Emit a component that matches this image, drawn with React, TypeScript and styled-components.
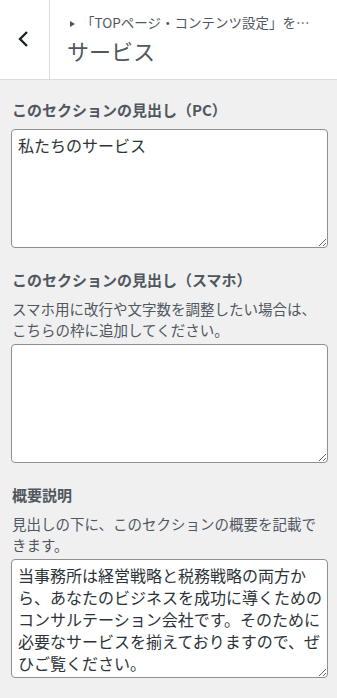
import React from 'react'
import styled, { createGlobalStyle } from 'styled-components'

const GlobalStyle = createGlobalStyle`
  html, body {
    margin: 0;
    padding: 0;
    background: #f0f0f1;
  }
  body {
    font-family: "Noto Sans CJK JP", "Noto Sans", sans-serif;
    color: #50575e;
  }
`

const Panel = styled.div`
  width: 337px;
  min-height: 698px;
  background: #f0f0f1;
`

const Header = styled.header`
  display: flex;
  height: 79px;
  background: #fff;
  border-bottom: 1px solid #dcdcde;
`

const BackButton = styled.button`
  display: flex;
  align-items: center;
  justify-content: center;
  width: 50px;
  padding: 0 2px 2px 0;
  border: none;
  border-right: 1px solid #dcdcde;
  background: transparent;
  cursor: pointer;
`

const TitleBlock = styled.div`
  display: flex;
  flex-direction: column;
  min-width: 0;
  flex: 1;
  padding: 10px 8px 0 17px;
`

const Breadcrumb = styled.span`
  display: block;
  font-size: 13.5px;
  line-height: 24px;
  white-space: nowrap;
  color: #50575e;

  &::before {
    content: '';
    display: inline-block;
    width: 0;
    height: 0;
    margin: 0 6px 1px 3px;
    border-top: 3px solid transparent;
    border-bottom: 3px solid transparent;
    border-left: 5px solid #50575e;
  }
`

const Title = styled.h1`
  margin: 2px 0 0;
  font-size: 22px;
  line-height: 28px;
  font-weight: 400;
  color: #50575e;
`

const Content = styled.div`
  display: flex;
  flex-direction: column;
  gap: 20px;
  padding: 18px 9px 20px 11px;
`

const Control = styled.div`
  display: flex;
  flex-direction: column;
`

const Label = styled.label`
  padding-left: 1px;
  font-size: 15px;
  line-height: 24px;
  font-weight: 700;
  color: #50575e;
`

const Description = styled.p`
  margin: 6px 0 0;
  padding-left: 1px;
  font-size: 14.5px;
  line-height: 21px;
  color: #50575e;
`

const TextArea = styled.textarea<{ $gap: number }>`
  box-sizing: border-box;
  width: 317px;
  height: 119px;
  margin-top: ${p => p.$gap}px;
  padding: 4px 4px 4px 6px;
  border: 1px solid #8c8f94;
  border-radius: 4px;
  background: #fff;
  color: #2c3338;
  font-family: "Noto Sans CJK JP", "Noto Sans", sans-serif;
  font-size: 16px;
  line-height: 22px;
  resize: vertical;
  overflow: hidden;
  outline: none;
`

export default function App() {
  return (
    <Panel>
      <GlobalStyle />
      <Header>
        <BackButton aria-label="戻る">
          <svg width="12" height="18" viewBox="0 0 12 18">
            <polyline points="9,2 2,9 9,16" fill="none" stroke="#1d2327" strokeWidth="2.4" />
          </svg>
        </BackButton>
        <TitleBlock>
          <Breadcrumb>「TOPページ・コンテンツ設定」を…</Breadcrumb>
          <Title>サービス</Title>
        </TitleBlock>
      </Header>
      <Content>
        <Control>
          <Label>このセクションの見出し（PC）</Label>
          <TextArea $gap={7} defaultValue="私たちのサービス" />
        </Control>
        <Control>
          <Label>このセクションの見出し（スマホ）</Label>
          <Description>スマホ用に改行や文字数を調整したい場合は、こちらの枠に追加してください。</Description>
          <TextArea $gap={4} defaultValue="" />
        </Control>
        <Control>
          <Label>概要説明</Label>
          <Description>見出しの下に、このセクションの概要を記載できます。</Description>
          <TextArea
            $gap={4}
            defaultValue="当事務所は経営戦略と税務戦略の両方から、あなたのビジネスを成功に導くためのコンサルテーション会社です。そのために必要なサービスを揃えておりますので、ぜひご覧ください。"
          />
        </Control>
      </Content>
    </Panel>
  )
}
